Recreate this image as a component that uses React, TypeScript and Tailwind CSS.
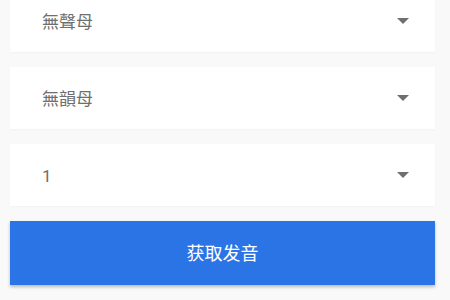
import React from "react";

const fields = ["無聲母", "無韻母", "1"];

const Arrow: React.FC = () => (
  <svg width="12" height="6" viewBox="0 0 12 6" className="shrink-0">
    <path d="M0 0h12L6 6z" fill="#6f6f6f" />
  </svg>
);

const App: React.FC = () => {
  return (
    <div
      className="min-h-screen w-[450px] h-[300px] overflow-hidden bg-[#f9f9f9]"
      style={{ fontFamily: 'Roboto, "Noto Sans CJK TC", "Noto Sans CJK SC", sans-serif' }}
    >
      <div className="flex flex-col gap-[15px] px-[10px] pr-[15px] -mt-[10px]">
        {fields.map((f) => (
          <div
            key={f}
            className="h-[62px] bg-white flex items-center justify-between pl-[32px] pr-[26px] shadow-[0_1px_2px_rgba(0,0,0,0.03)]"
          >
            <span className="text-[17px] text-[#6e6e6e] mt-[3px]">{f}</span>
            <Arrow />
          </div>
        ))}
        <button className="h-[64px] bg-[#2b74e6] text-white text-[18px] shadow-[0_2px_3px_rgba(0,0,0,0.25)]">
          获取发音
        </button>
      </div>
    </div>
  );
};

export default App;
